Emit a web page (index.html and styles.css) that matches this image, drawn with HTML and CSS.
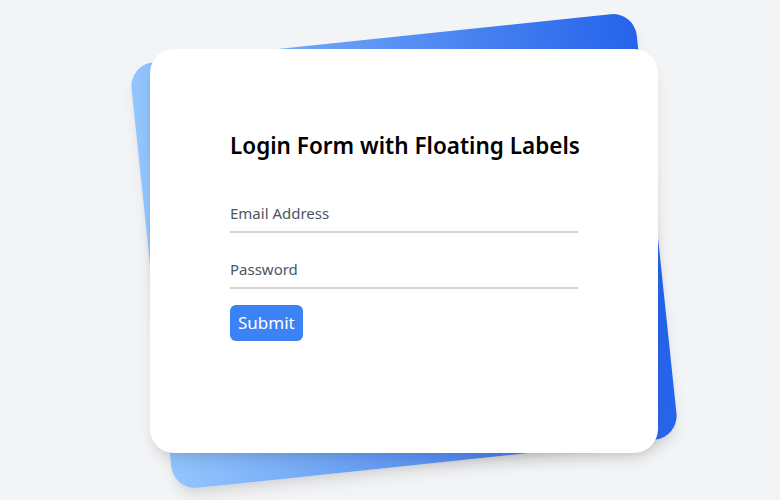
FILE: index.html
```html
<html>
<head>
  <title>Login Form</title>
  <link rel="stylesheet" href="styles.css">
</head>
<body>
  <div class="page">
    <div class="wrap">
      <div class="backdrop"></div>
      <div class="card">
        <div class="content">
          <h1 class="title">Login Form with Floating Labels</h1>
          <form class="fields">
            <div class="field">
              <input type="text" id="email" class="input" placeholder=" " />
              <label for="email" class="label">Email Address</label>
            </div>
            <div class="field">
              <input type="password" id="password" class="input" placeholder=" " />
              <label for="password" class="label">Password</label>
            </div>
            <div class="field">
              <button type="button" class="submit">Submit</button>
            </div>
          </form>
        </div>
      </div>
    </div>
  </div>
</body>
</html>
```

FILE: styles.css
```css
body {
  margin: 0;
  padding: 0;
  background-color: #f3f4f6;
  font-family: "Noto Sans", "Open Sans", sans-serif;
}

.page {
  min-height: 100vh;
  display: flex;
  flex-direction: column;
  justify-content: center;
  box-sizing: border-box;
  padding: 2px 0 0 28px;
}

.wrap {
  position: relative;
  padding: 12px 0;
  margin: 0 auto;
}

.backdrop {
  position: absolute;
  inset: 0;
  background: linear-gradient(to right, #93c5fd, #2563eb);
  border-radius: 24px;
  transform: rotate(-6deg);
  box-shadow: 0 10px 15px -3px rgba(0, 0, 0, 0.1), 0 4px 6px -2px rgba(0, 0, 0, 0.05);
}

.card {
  position: relative;
  background-color: white;
  border-radius: 24px;
  padding: 80px;
  box-shadow: 0 10px 15px -3px rgba(0, 0, 0, 0.1), 0 4px 6px -2px rgba(0, 0, 0, 0.05);
}

.content {
  width: 348px;
}

.title {
  margin: 0;
  padding-top: 2px;
  font-size: 22.5px;
  line-height: 30px;
  font-weight: 600;
  color: #000;
  white-space: nowrap;
}

.fields {
  margin: 0;
  padding: 32px 0;
  display: flex;
  flex-direction: column;
  gap: 16px;
  color: #374151;
  font-size: 18px;
  line-height: 28px;
}

.field {
  position: relative;
}

.input {
  display: block;
  box-sizing: border-box;
  width: 100%;
  height: 40px;
  border: 0;
  border-bottom: 2px solid #d1d5db;
  padding: 0;
  font: inherit;
  color: #111827;
  background: transparent;
}

.input:focus {
  outline: none;
}

.label {
  position: absolute;
  left: 0;
  top: 8px;
  font-size: 15px;
  line-height: 24px;
  color: #4b5563;
}

.submit {
  background-color: #3b82f6;
  color: white;
  border: 0;
  border-radius: 6px;
  padding: 4px 8px;
  font: inherit;
  font-size: 17px;
  line-height: 28px;
  cursor: pointer;
}
```
